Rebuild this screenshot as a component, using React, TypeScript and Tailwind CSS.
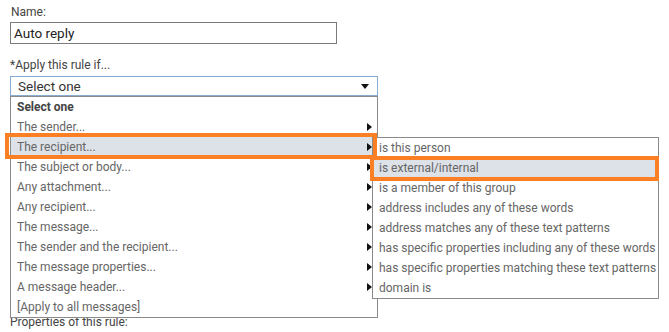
const mainItems = [
  'The sender...',
  'The recipient...',
  'The subject or body...',
  'Any attachment...',
  'Any recipient...',
  'The message...',
  'The sender and the recipient...',
  'The message properties...',
  'A message header...',
]

const subItems = [
  'is this person',
  'is external/internal',
  'is a member of this group',
  'address includes any of these words',
  'address matches any of these text patterns',
  'has specific properties including any of these words',
  'has specific properties matching these text patterns',
  'domain is',
]

function RightArrow() {
  return (
    <svg width="5" height="8" viewBox="0 0 5 8" className="shrink-0">
      <path d="M0 0 L5 4 L0 8 Z" fill="#111" />
    </svg>
  )
}

export default function App() {
  return (
    <div
      className="relative w-[669px] h-[332px] overflow-hidden bg-white text-[12px] text-[#444] whitespace-nowrap"
      style={{ fontFamily: 'Roboto, "Noto Sans", sans-serif' }}
    >
      <div className="flex flex-col pl-[10px] pt-[3px]">
        <div className="h-[18px] leading-[18px] pl-[1px] text-[#444]">Name:</div>
        <div className="mt-[1px] w-[327px] h-[22px] border border-[#7a7a7a] flex items-center px-[3px] text-[13.5px] text-[#222]">
          Auto reply
        </div>

        <div className="mt-[12px] h-[18px] leading-[18px] text-[#444]">*Apply this rule if...</div>

        <div className="relative mt-[2px]">
          <div className="w-[368px] h-[20px] border border-[#89acd3] flex items-center justify-between pl-[7px] pr-[8px] text-[13.5px] text-[#333]">
            <span>Select one</span>
            <svg width="8" height="5" viewBox="0 0 8 5">
              <path d="M0 0 L8 0 L4 5 Z" fill="#111" />
            </svg>
          </div>

          {/* dropdown list */}
          <div className="absolute left-0 top-[20px] w-[368px] border border-[#8a8a8a] bg-white flex flex-col z-10">
            <div className="h-[20px] flex items-center px-[6px] font-bold text-[#444]">Select one</div>
            {mainItems.map((item, i) => (
              <div
                key={item}
                className={`h-[20px] flex items-center justify-between pl-[6px] pr-[5px] text-[#666] ${
                  i === 1 ? 'bg-[#dde1e8]' : ''
                }`}
              >
                <span>{item}</span>
                <RightArrow />
              </div>
            ))}
            <div className="h-[20px] flex items-center px-[6px] text-[#666]">[Apply to all messages]</div>
          </div>

          <div className="mt-[217px] h-[18px] leading-[18px] text-[#444]">Properties of this rule:</div>
        </div>
      </div>

      {/* submenu */}
      <div className="absolute left-[372px] top-[137px] w-[287px] border border-[#8a8a8a] bg-white flex flex-col z-20">
        {subItems.map((item, i) => (
          <div
            key={item}
            className={`h-[20px] flex items-center px-[6px] text-[#666] ${i === 1 ? 'bg-[#dde1e8]' : ''}`}
          >
            {item}
          </div>
        ))}
      </div>

      {/* annotation boxes */}
      <div className="absolute left-[5px] top-[133px] w-[372px] h-[26px] border-[4px] border-[#fd7f24] z-30" />
      <div className="absolute left-[370px] top-[156px] w-[289px] h-[25px] border-[4px] border-[#fd7f24] z-30" />
    </div>
  )
}
